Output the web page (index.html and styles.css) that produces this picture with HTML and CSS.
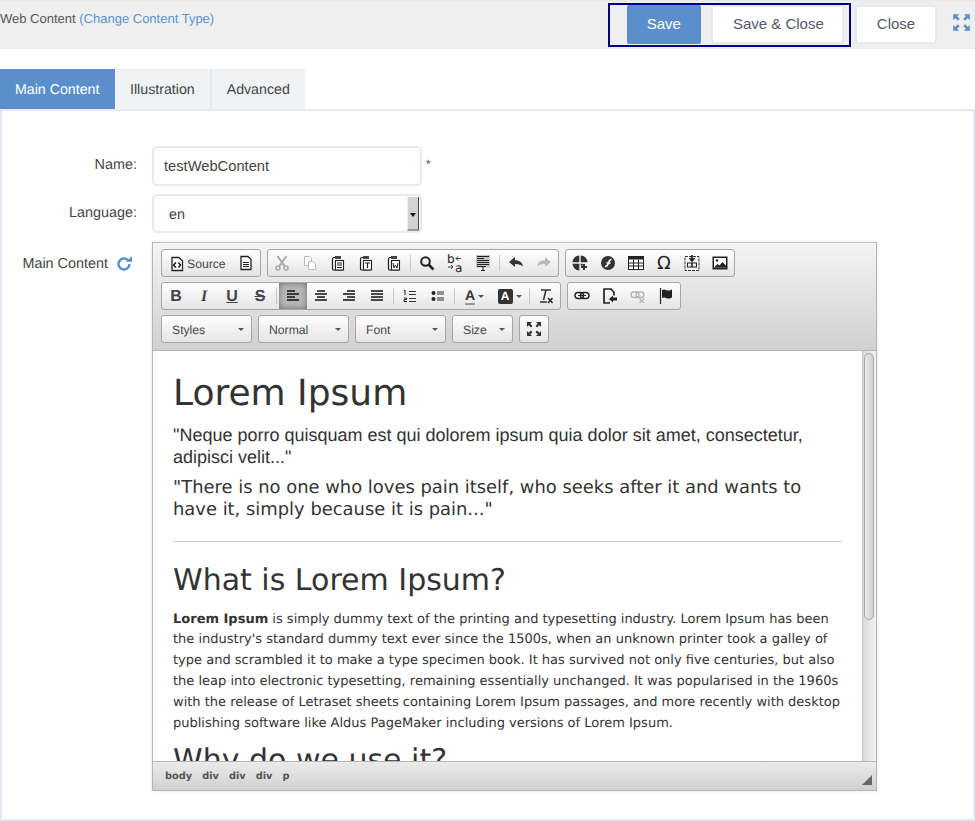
FILE: index.html
```html
<!DOCTYPE html>
<html lang="en">
<head>
	<meta charset="UTF-8"/>
	<meta name="viewport" content="width=device-width, initial-scale=1"/>
	<title>Web Content</title>
	<link rel="stylesheet" href="styles.css">
</head>
<body>

<svg class="sprite" aria-hidden="true">
	<symbol id="i-source" viewBox="0 0 16 16"><path d="M3 1.500h7l3.500 3.500v9.500h-10.500z" fill="#fff" stroke="#222" stroke-width="1.300"/><path d="M7 6.500l-2.500 2.500 2.500 2.500M9.500 6.500l2 2.500-2 2.500" fill="none" stroke="#111" stroke-width="1.400"/></symbol>
	<symbol id="i-doc" viewBox="0 0 16 16"><path d="M3 1.500h7l3 3v10h-10z" fill="#fff" stroke="#222" stroke-width="1.300"/><path d="M5 7.500h6M5 9.500h6M5 11.500h6" stroke="#222"/></symbol>
	<symbol id="i-cut" viewBox="0 0 16 16"><g fill="none" stroke="#a9a9a9" stroke-width="1.500"><circle cx="4" cy="13" r="2"/><circle cx="12" cy="13" r="2"/><path d="M5.500 11l7-10M10.500 11l-7-10" stroke-width="2"/></g></symbol>
	<symbol id="i-copy" viewBox="0 0 16 16"><g fill="#fff" stroke="#bbb"><path d="M2.500 1.500h5l2 2v7h-7z"/><path d="M6.500 6.500h5l2 2v6h-7z"/></g></symbol>
	<symbol id="i-paste" viewBox="0 0 16 16"><path d="M5.500 2.500h-1.500q-1.500 0-1.500 1.500v10q0 1 1 1h9" fill="none" stroke="#222" stroke-width="1.200"/><path d="M5 1h6v3h-6z" fill="#444"/><rect x="5.500" y="5.500" width="8" height="9.500" fill="#fff" stroke="#222" stroke-width="1.100"/><path d="M7 8h5M7 10h5M7 12.500h5" stroke="#222"/></symbol>
	<symbol id="i-paste-t" viewBox="0 0 16 16"><path d="M5.500 2.500h-1.500q-1.500 0-1.500 1.500v10q0 1 1 1h9" fill="none" stroke="#222" stroke-width="1.200"/><path d="M5 1h6v3h-6z" fill="#444"/><rect x="5.500" y="5.500" width="8" height="9.500" fill="#fff" stroke="#222" stroke-width="1.100"/><path d="M7 8h5M9.500 8v5" stroke="#222" stroke-width="1.200"/></symbol>
	<symbol id="i-paste-w" viewBox="0 0 16 16"><path d="M5.500 2.500h-1.500q-1.500 0-1.500 1.500v10q0 1 1 1h9" fill="none" stroke="#222" stroke-width="1.200"/><path d="M5 1h6v3h-6z" fill="#444"/><rect x="5.500" y="5.500" width="8" height="9.500" fill="#fff" stroke="#222" stroke-width="1.100"/><path d="M7 8l1 5 1.500-3 1.500 3 1-5" fill="none" stroke="#222"/></symbol>
	<symbol id="i-find" viewBox="0 0 16 16"><circle cx="6.500" cy="6.500" r="4.300" fill="none" stroke="#222" stroke-width="2"/><path d="M10 10l4.500 4.500" stroke="#222" stroke-width="2.600"/></symbol>
	<symbol id="i-selectall" viewBox="0 0 16 16"><rect x="1" y="0" width="14" height="12.500" fill="#c4c4c4"/><path d="M2 1.500h12M2 3.500h7M2 5.500h12M2 7.500h12M2 9.500h12M2 11.500h9" stroke="#222"/><path d="M6 15.500h4M8 12v3.500" stroke="#222"/></symbol>
	<symbol id="i-undo" viewBox="0 0 16 16"><path d="M1 7l6-5v3.200c4.500 0 7.500 2 8 6.800-1.700-2.300-4-3-8-3v3z" fill="#333"/></symbol>
	<symbol id="i-redo" viewBox="0 0 16 16"><path d="M15 7l-6-5v3.200c-4.500 0-7.500 2-8 6.800 1.700-2.300 4-3 8-3v3z" fill="#bbb"/></symbol>
	<symbol id="i-widget" viewBox="0 0 16 16"><path d="M7.300 .5v6.800h-6.800a7 7 0 0 1 6.800-6.800zM8.700 .5a7 7 0 0 1 6.800 6.800h-6.800zM.5 8.700h6.800v6.800a7 7 0 0 1-6.800-6.800zM8.700 8.700h2v2h-2z" fill="#333"/><path d="M12 9v6M9 12h6" stroke="#333" stroke-width="2"/></symbol>
	<symbol id="i-flash" viewBox="0 0 16 16"><circle cx="8" cy="8" r="7" fill="#333"/><path d="M5 11.500c2.500 0 3-1.500 3.500-3.500s1-3.500 3-3.500M6.500 8h4" fill="none" stroke="#fff" stroke-width="1.500"/></symbol>
	<symbol id="i-table" viewBox="0 0 16 16"><rect x=".5" y="1.500" width="15" height="13" fill="#fff" stroke="#222"/><path d="M.5 1.500h15v3h-15z" fill="#222"/><path d="M5.500 4.500v10M10.500 4.500v10M.5 8h15M.5 11h15" stroke="#222"/></symbol>
	<symbol id="i-embed" viewBox="0 0 16 16"><rect x="1" y="1.500" width="14" height="14" fill="#f4f4f4" stroke="#333" stroke-dasharray="3 1"/><path d="M8 0v5M5.500 3l2.500 3 2.500-3" fill="none" stroke="#222" stroke-width="1.700"/><rect x="3.500" y="8" width="4.500" height="4" fill="none" stroke="#222"/><rect x="8" y="8" width="4.500" height="4" fill="none" stroke="#222"/></symbol>
	<symbol id="i-image" viewBox="0 0 16 16"><rect x=".5" y="1.500" width="15" height="13" fill="#222"/><rect x="2" y="3" width="12" height="9.500" fill="#fff"/><circle cx="5" cy="5.500" r="1.200" fill="#222"/><path d="M2 12.500l3.500-3.500 2 1.500 3-3.500 3.500 3.500v2z" fill="#222"/></symbol>
	<symbol id="i-left" viewBox="0 0 16 16"><path d="M2 3h8M2 6h12M2 9h8M2 12h12" stroke="#111" stroke-width="1.600"/></symbol>
	<symbol id="i-center" viewBox="0 0 16 16"><path d="M4 3h8M2 6h12M4 9h8M2 12h12" stroke="#111" stroke-width="1.600"/></symbol>
	<symbol id="i-right" viewBox="0 0 16 16"><path d="M6 3h8M2 6h12M6 9h8M2 12h12" stroke="#111" stroke-width="1.600"/></symbol>
	<symbol id="i-justify" viewBox="0 0 16 16"><path d="M2 3h12M2 6h12M2 9h12M2 12h12" stroke="#111" stroke-width="1.600"/></symbol>
	<symbol id="i-ol" viewBox="0 0 16 16"><path d="M7 3.500h7M7 6.500h7M7 10.500h7M7 13.500h7" stroke="#333"/><path d="M3 2v5M2 3l1-1M2 10h2.500v1.500h-2.500v2h3" fill="none" stroke="#222"/></symbol>
	<symbol id="i-ul" viewBox="0 0 16 16"><circle cx="3.500" cy="5" r="2" fill="#222"/><circle cx="3.500" cy="11" r="2" fill="#222"/><path d="M7 4h7M7 6h7M7 10h7M7 12h7" stroke="#333" stroke-width="1.100"/></symbol>
	<symbol id="i-clear" viewBox="0 0 16 16"><path d="M3 2h10M8 2l-2.500 10M2 14h7" stroke="#333" stroke-width="1.600" fill="none"/><path d="M10 10l4.500 5M14.500 10l-4.500 5" stroke="#222" stroke-width="1.400"/></symbol>
	<symbol id="i-link" viewBox="0 0 16 16"><g fill="none" stroke="#222" stroke-width="1.400"><rect x="1" y="4.500" width="8.500" height="6" rx="3"/><rect x="6.500" y="4.500" width="8.500" height="6" rx="3"/></g><path d="M4 7.500h8" stroke="#222"/></symbol>
	<symbol id="i-internal" viewBox="0 0 16 16"><path d="M8 15h-6v-14h7l3 3.500v3" fill="none" stroke="#222" stroke-width="1.700"/><path d="M7 11l4-3.500v2h4v3h-4v2z" fill="#222"/></symbol>
	<symbol id="i-unlink" viewBox="0 0 16 16"><g fill="none" stroke="#b5b5b5" stroke-width="1.300"><rect x="1" y="4" width="8" height="5.500" rx="2.700"/><rect x="6" y="4" width="8" height="5.500" rx="2.700"/><path d="M9.500 10.500l4.500 4.500M14 10.500l-4.500 4.500"/></g></symbol>
	<symbol id="i-flag" viewBox="0 0 16 16"><path d="M2.500 0v16" stroke="#222" stroke-width="1.200"/><path d="M4 2c3-1.500 4 .5 6 .5s3-.5 4-1v8c-1 .5-2 1-4 1s-3-2-6-.5z" fill="#222"/></symbol>
	<symbol id="i-max" viewBox="0 0 16 16"><path d="M1 1h5l-1.700 1.700 2.200 2.200-1.600 1.600-2.200-2.200-1.700 1.700zM15 1v5l-1.700-1.700-2.200 2.200-1.600-1.600 2.200-2.200-1.700-1.700zM1 15v-5l1.700 1.700 2.200-2.200 1.600 1.600-2.200 2.200 1.700 1.700zM15 15h-5l1.700-1.700-2.200-2.200 1.600-1.600 2.200 2.200 1.700-1.700z" fill="#333"/></symbol>
</svg>

<header class="topbar">
	<div class="topbar-title">Web Content <a class="change-type">(Change Content Type)</a></div>
	<div class="topbar-actions">
		<div class="save-group">
			<button class="btn btn-primary btn-save">Save</button>
			<button class="btn btn-save-close">Save &amp; Close</button>
		</div>
		<button class="btn btn-close">Close</button>
		<svg class="expand-icon" viewBox="0 0 16 16"><path d="M1 1h5l-1.700 1.700 2.200 2.200-1.600 1.600-2.200-2.200-1.700 1.700zM15 1v5l-1.700-1.700-2.200 2.200-1.600-1.600 2.200-2.200-1.700-1.700zM1 15v-5l1.700 1.700 2.200-2.200 1.600 1.600-2.200 2.200 1.700 1.700zM15 15h-5l1.700-1.700-2.200-2.200 1.600-1.600 2.200 2.200 1.700-1.700z"/></svg>
	</div>
</header>

<nav class="tabs">
	<div class="tab tab-active">Main Content</div>
	<div class="tab">Illustration</div>
	<div class="tab tab-last">Advanced</div>
</nav>

<main class="panel">
	<div class="form-row">
		<label class="form-label">Name:</label>
		<input class="text-input" type="text" value="testWebContent"/>
		<span class="required">*</span>
	</div>

	<div class="form-row">
		<label class="form-label">Language:</label>
		<div class="select-box">
			<span class="select-value">en</span>
			<span class="select-arrow"></span>
		</div>
	</div>

	<div class="form-row editor-row">
		<label class="form-label form-label-editor">Main Content
			<svg class="reload-icon" viewBox="0 0 16 16"><path d="M13.500 8a5.500 5.500 0 1 1-1.800-4.100" fill="none" stroke="#5a8fcb" stroke-width="2.400"/><path d="M9.500 5.800h6.500v-5.500z" fill="#5a8fcb"/></svg>
		</label>

		<div class="editor">
			<div class="toolbar">
				<div class="tool-row">
					<div class="tool-group">
						<span class="tool tool-source"><svg class="ico"><use href="#i-source"/></svg><span class="source-label">Source</span></span>
						<span class="tool"><svg class="ico"><use href="#i-doc"/></svg></span>
					</div>
					<div class="tool-group">
						<span class="tool"><svg class="ico"><use href="#i-cut"/></svg></span>
						<span class="tool"><svg class="ico"><use href="#i-copy"/></svg></span>
						<span class="tool"><svg class="ico"><use href="#i-paste"/></svg></span>
						<span class="tool"><svg class="ico"><use href="#i-paste-t"/></svg></span>
						<span class="tool"><svg class="ico"><use href="#i-paste-w"/></svg></span>
						<span class="tool-sep"></span>
						<span class="tool"><svg class="ico"><use href="#i-find"/></svg></span>
						<span class="tool tool-replace">
							<span class="rep-b">b</span><span class="rep-a">a</span>
							<svg class="ico"><path d="M9 3.500h5M9 3.500l2-2M9 3.500l2 2M1 12h5M6 12l-2-2M6 12l-2 2" fill="none" stroke="#444"/></svg>
						</span>
						<span class="tool"><svg class="ico"><use href="#i-selectall"/></svg></span>
						<span class="tool-sep"></span>
						<span class="tool"><svg class="ico"><use href="#i-undo"/></svg></span>
						<span class="tool"><svg class="ico"><use href="#i-redo"/></svg></span>
					</div>
					<div class="tool-group">
						<span class="tool"><svg class="ico"><use href="#i-widget"/></svg></span>
						<span class="tool"><svg class="ico"><use href="#i-flash"/></svg></span>
						<span class="tool"><svg class="ico"><use href="#i-table"/></svg></span>
						<span class="tool tool-letter tool-omega">Ω</span>
						<span class="tool"><svg class="ico"><use href="#i-embed"/></svg></span>
						<span class="tool"><svg class="ico"><use href="#i-image"/></svg></span>
					</div>
				</div>

				<div class="tool-row">
					<div class="tool-group">
						<span class="tool tool-letter tool-bold">B</span>
						<span class="tool tool-letter tool-italic">I</span>
						<span class="tool tool-letter tool-under">U</span>
						<span class="tool tool-letter tool-strike">S</span>
						<span class="tool-sep"></span>
						<span class="tool tool-on"><svg class="ico"><use href="#i-left"/></svg></span>
						<span class="tool"><svg class="ico"><use href="#i-center"/></svg></span>
						<span class="tool"><svg class="ico"><use href="#i-right"/></svg></span>
						<span class="tool"><svg class="ico"><use href="#i-justify"/></svg></span>
						<span class="tool-sep"></span>
						<span class="tool"><svg class="ico"><use href="#i-ol"/></svg></span>
						<span class="tool"><svg class="ico"><use href="#i-ul"/></svg></span>
						<span class="tool-sep"></span>
						<span class="tool tool-color"><span class="color-a">A</span><i class="caret"></i></span>
						<span class="tool tool-color"><span class="color-bg">A</span><i class="caret"></i></span>
						<span class="tool-sep"></span>
						<span class="tool"><svg class="ico"><use href="#i-clear"/></svg></span>
					</div>
					<div class="tool-group">
						<span class="tool"><svg class="ico"><use href="#i-link"/></svg></span>
						<span class="tool"><svg class="ico"><use href="#i-internal"/></svg></span>
						<span class="tool"><svg class="ico"><use href="#i-unlink"/></svg></span>
						<span class="tool"><svg class="ico"><use href="#i-flag"/></svg></span>
					</div>
				</div>

				<div class="tool-row">
					<div class="combo combo-wide"><span>Styles</span><i class="caret"></i></div>
					<div class="combo combo-wide"><span>Normal</span><i class="caret"></i></div>
					<div class="combo combo-wide"><span>Font</span><i class="caret"></i></div>
					<div class="combo combo-size"><span>Size</span><i class="caret"></i></div>
					<div class="tool-group"><span class="tool tool-max"><svg class="ico"><use href="#i-max"/></svg></span></div>
				</div>
			</div>

			<div class="edit-area">
				<div class="edit-content">
					<h1>Lorem Ipsum</h1>
					<p class="quote-en">"Neque porro quisquam est qui dolorem ipsum quia dolor sit amet, consectetur, adipisci velit..."</p>
					<p class="quote">"There is no one who loves pain itself, who seeks after it and wants to have it, simply because it is pain..."</p>
					<hr/>
					<h2>What is Lorem Ipsum?</h2>
					<p class="body-text"><strong>Lorem Ipsum</strong> is simply dummy text of the printing and typesetting industry. Lorem Ipsum has been the industry's standard dummy text ever since the 1500s, when an unknown printer took a galley of type and scrambled it to make a type specimen book. It has survived not only five centuries, but also the leap into electronic typesetting, remaining essentially unchanged. It was popularised in the 1960s with the release of Letraset sheets containing Lorem Ipsum passages, and more recently with desktop publishing software like Aldus PageMaker including versions of Lorem Ipsum.</p>
					<h2 class="why">Why do we use it?</h2>
				</div>
				<div class="scrollbar"><div class="scroll-thumb"></div></div>
			</div>

			<div class="statusbar">
				<span>body</span><span>div</span><span>div</span><span>div</span><span>p</span>
				<i class="resize-grip"></i>
			</div>
		</div>
	</div>
</main>

</body>
</html>
```

FILE: styles.css
```css
* {
    box-sizing: border-box;
}

html, body {
    height: 821px;
    overflow: hidden;
}

body {
    margin: 0;
    font-family: "Liberation Sans", Arial, sans-serif;
    font-size: 14.4px;
    color: #444;
    background-color: #fff;
    text-rendering: geometricPrecision;
}

.sprite {
    position: absolute;
    width: 0;
    height: 0;
}

/* Top bar */
.topbar {
    display: flex;
    justify-content: space-between;
    height: 49px;
    background-color: #efefef;
    border-top: 1px solid #e5eaf0;
    border-bottom: 1px solid #e5eaf0;
}

.topbar-title {
    padding-top: 10px;
    font-size: 13px;
    line-height: 15px;
    color: #555;
}

.change-type {
    color: #5b93d2;
}

.topbar-actions {
    display: flex;
    align-items: flex-start;
    padding-top: 2px;
    padding-right: 4px;
}

.save-group {
    display: flex;
    width: 243px;
    height: 44px;
    padding: 0 5px 0 17px;
    border: 2px solid #000080;
}

.btn {
    height: 39px;
    padding: 0 0 2px;
    font-family: inherit;
    font-size: 15px;
    color: #555a6b;
    background-color: #fff;
    border: 2px solid #e5eaf0;
}

.btn-primary {
    color: #fff;
    background-color: #5a8fcb;
    border-color: #5a8fcb;
    border-radius: 2px;
}

.btn-save {
    width: 74px;
}

.btn-save-close {
    width: 134px;
    margin-left: 10px;
    padding-left: 2px;
}

.btn-close {
    width: 82px;
    margin-top: 2px;
    margin-left: 4px;
    border-radius: 2px;
}

.expand-icon {
    width: 19px;
    height: 19px;
    margin-top: 10px;
    margin-left: 15px;
    fill: #5a8fcb;
}

/* Tabs */
.tabs {
    display: flex;
    height: 40px;
    margin-top: 20px;
    font-size: 14.2px;
}

.tab {
    display: flex;
    align-items: center;
    padding: 1px 15px 0;
    background-color: #eff3f6;
    border-right: 2px solid #e5eaf0;
    color: #444;
}

.tab-active {
    width: 115px;
    color: #fff;
    background-color: #5a8fcb;
    border-right: none;
}

.tab-last {
    border-right: none;
}

/* Form panel */
.panel {
    height: 712px;
    padding-top: 35px;
    border: 2px solid #e5eaf0;
}

.form-row {
    display: flex;
    margin-bottom: 8px;
}

.form-label {
    flex: 0 0 135px;
    margin-right: 15px;
    padding-top: 11px;
    line-height: 16px;
    text-align: right;
    color: #444;
}

.text-input {
    width: 270px;
    height: 40px;
    padding: 0 10px;
    font-family: inherit;
    font-size: 14.7px;
    color: #444;
    border: 2px solid #e5eaf0;
    border-radius: 5px;
}

.required {
    margin-left: 4px;
    padding-top: 11px;
    font-size: 12px;
    color: #555;
}

.select-box {
    display: flex;
    justify-content: space-between;
    width: 270px;
    height: 39px;
    padding: 1px 1px 0 0;
    border: 2px solid #e5eaf0;
    border-radius: 5px;
}

.select-value {
    padding-left: 15px;
    line-height: 36px;
}

.select-arrow {
    position: relative;
    width: 12px;
    background-color: #d2d2d2;
    border-right: 1px solid #444;
    border-bottom: 2px solid #999;
    border-left: 1px solid #eee;
}

.select-arrow::after {
    content: "";
    position: absolute;
    top: 16px;
    left: 2px;
    border: 3px solid transparent;
    border-top: 4px solid #111;
    border-bottom: none;
}

.editor-row {
    margin-top: 9px;
    margin-bottom: 0;
}

.form-label-editor {
    display: flex;
    justify-content: flex-end;
    flex-basis: 130px;
    margin-right: 20px;
    padding-top: 14px;
    white-space: nowrap;
}

.reload-icon {
    width: 16px;
    height: 16px;
    margin-left: 8px;
}

/* Editor */
.editor {
    display: flex;
    flex-direction: column;
    width: 725px;
    height: 549px;
    border: 1px solid #b6b6b6;
    border-top-color: #c0c0c0;
    box-shadow: 0 0 3px rgba(0, 0, 0, 0.12);
}

.toolbar {
    display: flex;
    flex-direction: column;
    gap: 5px;
    height: 108px;
    padding: 6px 8px 0;
    background: linear-gradient(#f4f4f4, #cfd1cf);
    border-bottom: 1px solid #b6b6b6;
}

.tool-row {
    display: flex;
    gap: 6px;
    height: 28px;
}

.tool-group {
    display: flex;
    align-items: stretch;
    background: linear-gradient(#fff, #e4e4e4);
    border: 1px solid #a6a6a6;
    border-radius: 3px;
}

.tool {
    display: flex;
    align-items: center;
    justify-content: center;
    width: 28px;
    color: #333;
}

.ico {
    width: 16px;
    height: 16px;
}

.tool-source {
    width: 70px;
    justify-content: flex-start;
    padding-left: 7px;
    padding-top: 1px;
}

.source-label {
    margin-left: 2px;
    font-size: 12.2px;
    color: #474747;
}

.tool-sep {
    width: 1px;
    margin: 5px 2px;
    background-color: #c8c8c8;
}

.tool-letter {
    padding-top: 1px;
    font-family: "Liberation Sans", sans-serif;
    font-size: 16px;
    font-weight: bold;
    color: #444;
}

.tool-italic {
    font-family: "Liberation Serif", serif;
    font-style: italic;
}

.tool-under {
    text-decoration: underline;
}

.tool-strike {
    text-decoration: line-through;
}

.tool-omega {
    font-family: "DejaVu Sans", sans-serif;
    font-size: 18px;
    font-weight: normal;
    color: #222;
}

.tool-on {
    background: #b8b8b8;
    box-shadow: inset 0 0 6px #666;
}

.tool-replace {
    position: relative;
}

.rep-b, .rep-a {
    position: absolute;
    font-family: "DejaVu Sans", sans-serif;
    font-size: 12px;
    line-height: 12px;
    color: #222;
}

.rep-b {
    top: 3px;
    left: 6px;
}

.rep-a {
    top: 12px;
    left: 14px;
}

.tool-color {
    width: 35px;
    gap: 3px;
}

.color-a {
    font-weight: bold;
    font-size: 14px;
    line-height: 15px;
    color: #333;
    border-bottom: 2px solid #999;
}

.color-bg {
    width: 15px;
    height: 15px;
    font-size: 12px;
    font-weight: bold;
    line-height: 15px;
    text-align: center;
    color: #fff;
    background-color: #333;
    border-radius: 2px;
}

.caret {
    width: 0;
    height: 0;
    border: 3px solid transparent;
    border-top: 3px solid #555;
    border-bottom: none;
}

.combo {
    display: flex;
    align-items: center;
    justify-content: space-between;
    padding: 1px 7px 0 10px;
    font-size: 12.2px;
    color: #484848;
    background: linear-gradient(#fff, #e4e4e4);
    border: 1px solid #a6a6a6;
    border-radius: 3px;
}

.combo-wide {
    width: 91px;
}

.combo-size {
    width: 61px;
}

.tool-max {
    width: 28px;
}

/* Editing area */
.edit-area {
    display: flex;
    flex: 1;
    min-height: 0;
    background-color: #fff;
}

.edit-content {
    flex: 1;
    overflow: hidden;
    padding: 0 20px;
    font-family: "DejaVu Sans", sans-serif;
    color: #333;
}

.edit-content h1 {
    margin: 21px 0 0;
    font-size: 36px;
    font-weight: normal;
    line-height: 43px;
}

.quote-en {
    margin: 9px 0 0;
    font-family: "Liberation Sans", sans-serif;
    font-size: 18px;
    line-height: 22px;
}

.quote {
    margin: 9px 0 0;
    font-size: 17.92px;
    line-height: 22px;
}

.edit-content hr {
    margin: 20px 0 0;
    border: none;
    border-top: 1px solid #ccc;
}

.edit-content h2 {
    margin: 21px 0 0;
    font-size: 30px;
    font-weight: normal;
    line-height: 36px;
}

.body-text {
    margin: 10.6px 0 0;
    font-size: 13px;
    line-height: 20.8px;
}

.edit-content h2.why {
    margin-top: 9px;
}

.scrollbar {
    flex: 0 0 14px;
    padding: 2px 1px 0;
    background: linear-gradient(to right, #d9d9d9, #f2f2f2);
    border-left: 1px solid #c4c4c4;
}

.scroll-thumb {
    width: 10px;
    height: 267px;
    background: linear-gradient(to right, #e8e8e8, #cfcfcf);
    border: 1px solid #a9a9a9;
    border-radius: 5px;
}

.statusbar {
    position: relative;
    display: flex;
    align-items: center;
    gap: 10px;
    height: 29px;
    padding-left: 12px;
    font-size: 9.8px;
    font-family: "DejaVu Sans", sans-serif;
    font-weight: bold;
    color: #555;
    background: linear-gradient(#ebebeb, #cfd1cf);
    border-top: 1px solid #b6b6b6;
}

.resize-grip {
    position: absolute;
    right: 4px;
    bottom: 5px;
    width: 0;
    height: 0;
    border-left: 10px solid transparent;
    border-bottom: 10px solid #666;
}
```
